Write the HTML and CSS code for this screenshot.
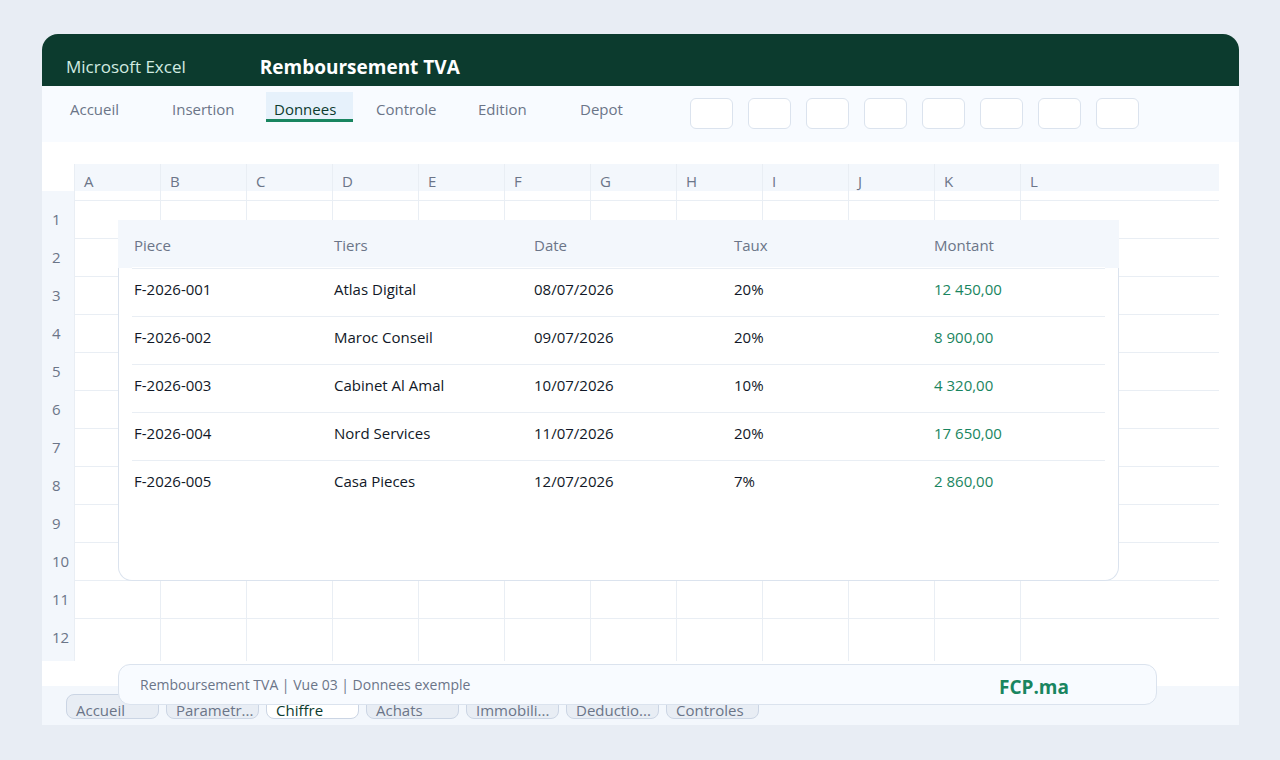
FILE: index.html
```html
<!DOCTYPE html>
<html lang="fr">
<head>
  <meta charset="UTF-8" />
  <meta name="viewport" content="width=device-width, initial-scale=1" />
  <title>Remboursement TVA</title>
  <link rel="stylesheet" href="styles.css">
</head>
<body>
  <div class="window">
    <header class="titlebar">
      <span class="app-name">Microsoft Excel</span>
      <h1>Remboursement TVA</h1>
    </header>

    <nav class="ribbon">
      <div class="ribbon-tabs">
        <button type="button">Accueil</button>
        <button type="button">Insertion</button>
        <button type="button" class="active">Donnees</button>
        <button type="button">Controle</button>
        <button type="button">Edition</button>
        <button type="button">Depot</button>
      </div>
      <div class="ribbon-tools">
        <button type="button" aria-label="Outil 1"></button>
        <button type="button" aria-label="Outil 2"></button>
        <button type="button" aria-label="Outil 3"></button>
        <button type="button" aria-label="Outil 4"></button>
        <button type="button" aria-label="Outil 5"></button>
        <button type="button" aria-label="Outil 6"></button>
        <button type="button" aria-label="Outil 7"></button>
        <button type="button" aria-label="Outil 8"></button>
      </div>
    </nav>

    <main class="sheet">
      <table class="grid">
        <thead>
          <tr><td class="corner"></td><th>A</th><th>B</th><th>C</th><th>D</th><th>E</th><th>F</th><th>G</th><th>H</th><th>I</th><th>J</th><th>K</th><th class="last">L</th></tr>
        </thead>
        <tbody>
          <tr class="gap"><th></th><td></td><td></td><td></td><td></td><td></td><td></td><td></td><td></td><td></td><td></td><td></td><td></td></tr>
          <tr><th>1</th><td></td><td></td><td></td><td></td><td></td><td></td><td></td><td></td><td></td><td></td><td></td><td></td></tr>
          <tr><th>2</th><td></td><td></td><td></td><td></td><td></td><td></td><td></td><td></td><td></td><td></td><td></td><td></td></tr>
          <tr><th>3</th><td></td><td></td><td></td><td></td><td></td><td></td><td></td><td></td><td></td><td></td><td></td><td></td></tr>
          <tr><th>4</th><td></td><td></td><td></td><td></td><td></td><td></td><td></td><td></td><td></td><td></td><td></td><td></td></tr>
          <tr><th>5</th><td></td><td></td><td></td><td></td><td></td><td></td><td></td><td></td><td></td><td></td><td></td><td></td></tr>
          <tr><th>6</th><td></td><td></td><td></td><td></td><td></td><td></td><td></td><td></td><td></td><td></td><td></td><td></td></tr>
          <tr><th>7</th><td></td><td></td><td></td><td></td><td></td><td></td><td></td><td></td><td></td><td></td><td></td><td></td></tr>
          <tr><th>8</th><td></td><td></td><td></td><td></td><td></td><td></td><td></td><td></td><td></td><td></td><td></td><td></td></tr>
          <tr><th>9</th><td></td><td></td><td></td><td></td><td></td><td></td><td></td><td></td><td></td><td></td><td></td><td></td></tr>
          <tr><th>10</th><td></td><td></td><td></td><td></td><td></td><td></td><td></td><td></td><td></td><td></td><td></td><td></td></tr>
          <tr><th>11</th><td></td><td></td><td></td><td></td><td></td><td></td><td></td><td></td><td></td><td></td><td></td><td></td></tr>
          <tr class="end"><th>12</th><td></td><td></td><td></td><td></td><td></td><td></td><td></td><td></td><td></td><td></td><td></td><td></td></tr>
        </tbody>
      </table>

      <section class="card">
        <table class="pieces">
          <thead>
            <tr><th>Piece</th><th>Tiers</th><th>Date</th><th>Taux</th><th>Montant</th></tr>
          </thead>
          <tbody>
            <tr><td>F-2026-001</td><td>Atlas Digital</td><td>08/07/2026</td><td>20%</td><td class="montant">12 450,00</td></tr>
            <tr><td>F-2026-002</td><td>Maroc Conseil</td><td>09/07/2026</td><td>20%</td><td class="montant">8 900,00</td></tr>
            <tr><td>F-2026-003</td><td>Cabinet Al Amal</td><td>10/07/2026</td><td>10%</td><td class="montant">4 320,00</td></tr>
            <tr><td>F-2026-004</td><td>Nord Services</td><td>11/07/2026</td><td>20%</td><td class="montant">17 650,00</td></tr>
            <tr><td>F-2026-005</td><td>Casa Pieces</td><td>12/07/2026</td><td>7%</td><td class="montant">2 860,00</td></tr>
          </tbody>
        </table>
      </section>
    </main>

    <nav class="sheet-tabs">
      <button type="button">Accueil</button>
      <button type="button">Parametr...</button>
      <button type="button" class="active">Chiffre</button>
      <button type="button">Achats</button>
      <button type="button">Immobili...</button>
      <button type="button">Deductio...</button>
      <button type="button">Controles</button>
    </nav>

    <footer class="caption">
      <span>Remboursement TVA | Vue 03 | Donnees exemple</span>
      <strong>FCP.ma</strong>
    </footer>
  </div>
</body>
</html>
```
FILE: styles.css
```css
* {
  box-sizing: border-box;
}

body {
  font-family: 'Segoe UI', 'Open Sans', 'Noto Sans', sans-serif;
  font-size: 15px;
  line-height: 20px;
  background: #e8edf4;
  color: #6b7588;
  margin: 0;
  padding: 34px 41px 35px 42px;
}

button {
  font: inherit;
  color: inherit;
  text-align: left;
  white-space: nowrap;
  cursor: pointer;
}

table {
  border-collapse: separate;
  border-spacing: 0;
  table-layout: fixed;
  width: 100%;
}

th {
  font-weight: 400;
  text-align: left;
}

.window {
  position: relative;
  background: #ffffff;
  border-radius: 16px 16px 0 0;
  overflow: hidden;
}

/* title bar */
.titlebar {
  display: flex;
  align-items: center;
  gap: 74px;
  padding: 20px 24px 6px;
  background: #0c3b2e;
}

.app-name {
  font-size: 17px;
  line-height: 26px;
  color: #d1ebe1;
}

.titlebar h1 {
  margin: 0;
  font-size: 19px;
  line-height: 26px;
  font-weight: 700;
  color: #ffffff;
}

/* ribbon */
.ribbon {
  display: flex;
  gap: 31px;
  padding: 6px 20px 13px;
  background: #f8fbff;
}

.ribbon-tabs {
  display: flex;
  align-items: flex-start;
  gap: 15px;
}

.ribbon-tabs button {
  width: 87px;
  padding: 7px 8px 0;
  background: none;
  border: none;
  border-bottom: 3px solid transparent;
}

.ribbon-tabs .active {
  background: #e6f1fb;
  border-bottom-color: #198560;
  color: #0c3b2e;
}

.ribbon-tools {
  display: flex;
  gap: 15px;
  padding-top: 6px;
}

.ribbon-tools button {
  width: 43px;
  height: 31px;
  background: #ffffff;
  border: 1px solid #dbe3ee;
  border-radius: 6px;
}

/* spreadsheet */
.sheet {
  position: relative;
  padding: 22px 20px 25px 0;
}

.grid th,
.grid td {
  height: 38px;
  padding: 0 10px;
  border-left: 1px solid #e9eef4;
  border-top: 1px solid #e9eef4;
}

.grid thead th {
  width: 86px;
  height: 27px;
  padding: 8px 9px 0;
  line-height: 19px;
  border-top: none;
  background: #f3f7fc;
}

.grid thead .last {
  width: auto;
}

.grid thead .corner {
  width: 32px;
  height: 27px;
  padding: 0;
  border: none;
}

.grid tbody th {
  border: none;
  background: #f3f7fc;
}

.grid .gap th,
.grid .gap td {
  height: 9px;
  padding: 0;
  border-top: none;
}

.grid .end th,
.grid .end td {
  height: 43px;
}

.grid .end th {
  padding-bottom: 5px;
}

/* invoice card over the grid */
.card {
  position: absolute;
  top: 78px;
  left: 76px;
  right: 120px;
  padding: 0 13px 72px;
  background: #ffffff;
  border: 1px solid #dbe3ee;
  border-top: none;
  border-radius: 0 0 14px 14px;
}

.pieces th,
.pieces td {
  width: 200px;
  padding: 0 2px;
}

.pieces th:last-child {
  width: auto;
}

.pieces thead tr {
  background: #f3f7fc;
  box-shadow: -14px 0 #f3f7fc, 14px 0 #f3f7fc;
}

.pieces th {
  height: 48px;
  padding-top: 3px;
  border-bottom: 1px solid #ffffff;
}

.pieces td {
  height: 48px;
  padding-bottom: 7px;
  border-top: 1px solid #e9eef4;
  color: #111827;
}

.pieces .montant {
  color: #198560;
}

/* sheet tabs */
.sheet-tabs {
  display: flex;
  gap: 7px;
  padding: 8px 24px 6px;
  background: #f3f7fc;
}

.sheet-tabs button {
  width: 93px;
  height: 25px;
  padding: 7px 9px 0;
  line-height: 17px;
  background: #e8edf4;
  border: 1px solid #cbd5e4;
  border-radius: 8px;
}

.sheet-tabs .active {
  background: #ffffff;
  color: #0c3b2e;
}

.caption {
  position: absolute;
  left: 76px;
  right: 82px;
  bottom: 20px;
  display: flex;
  align-items: center;
  justify-content: space-between;
  padding: 10px 87px 9px 21px;
  font-size: 14px;
  background: #f8fbff;
  border: 1px solid #dbe3ee;
  border-radius: 12px;
}

.caption strong {
  padding-top: 4px;
  font-size: 19px;
  line-height: 16px;
  color: #198560;
}
```
